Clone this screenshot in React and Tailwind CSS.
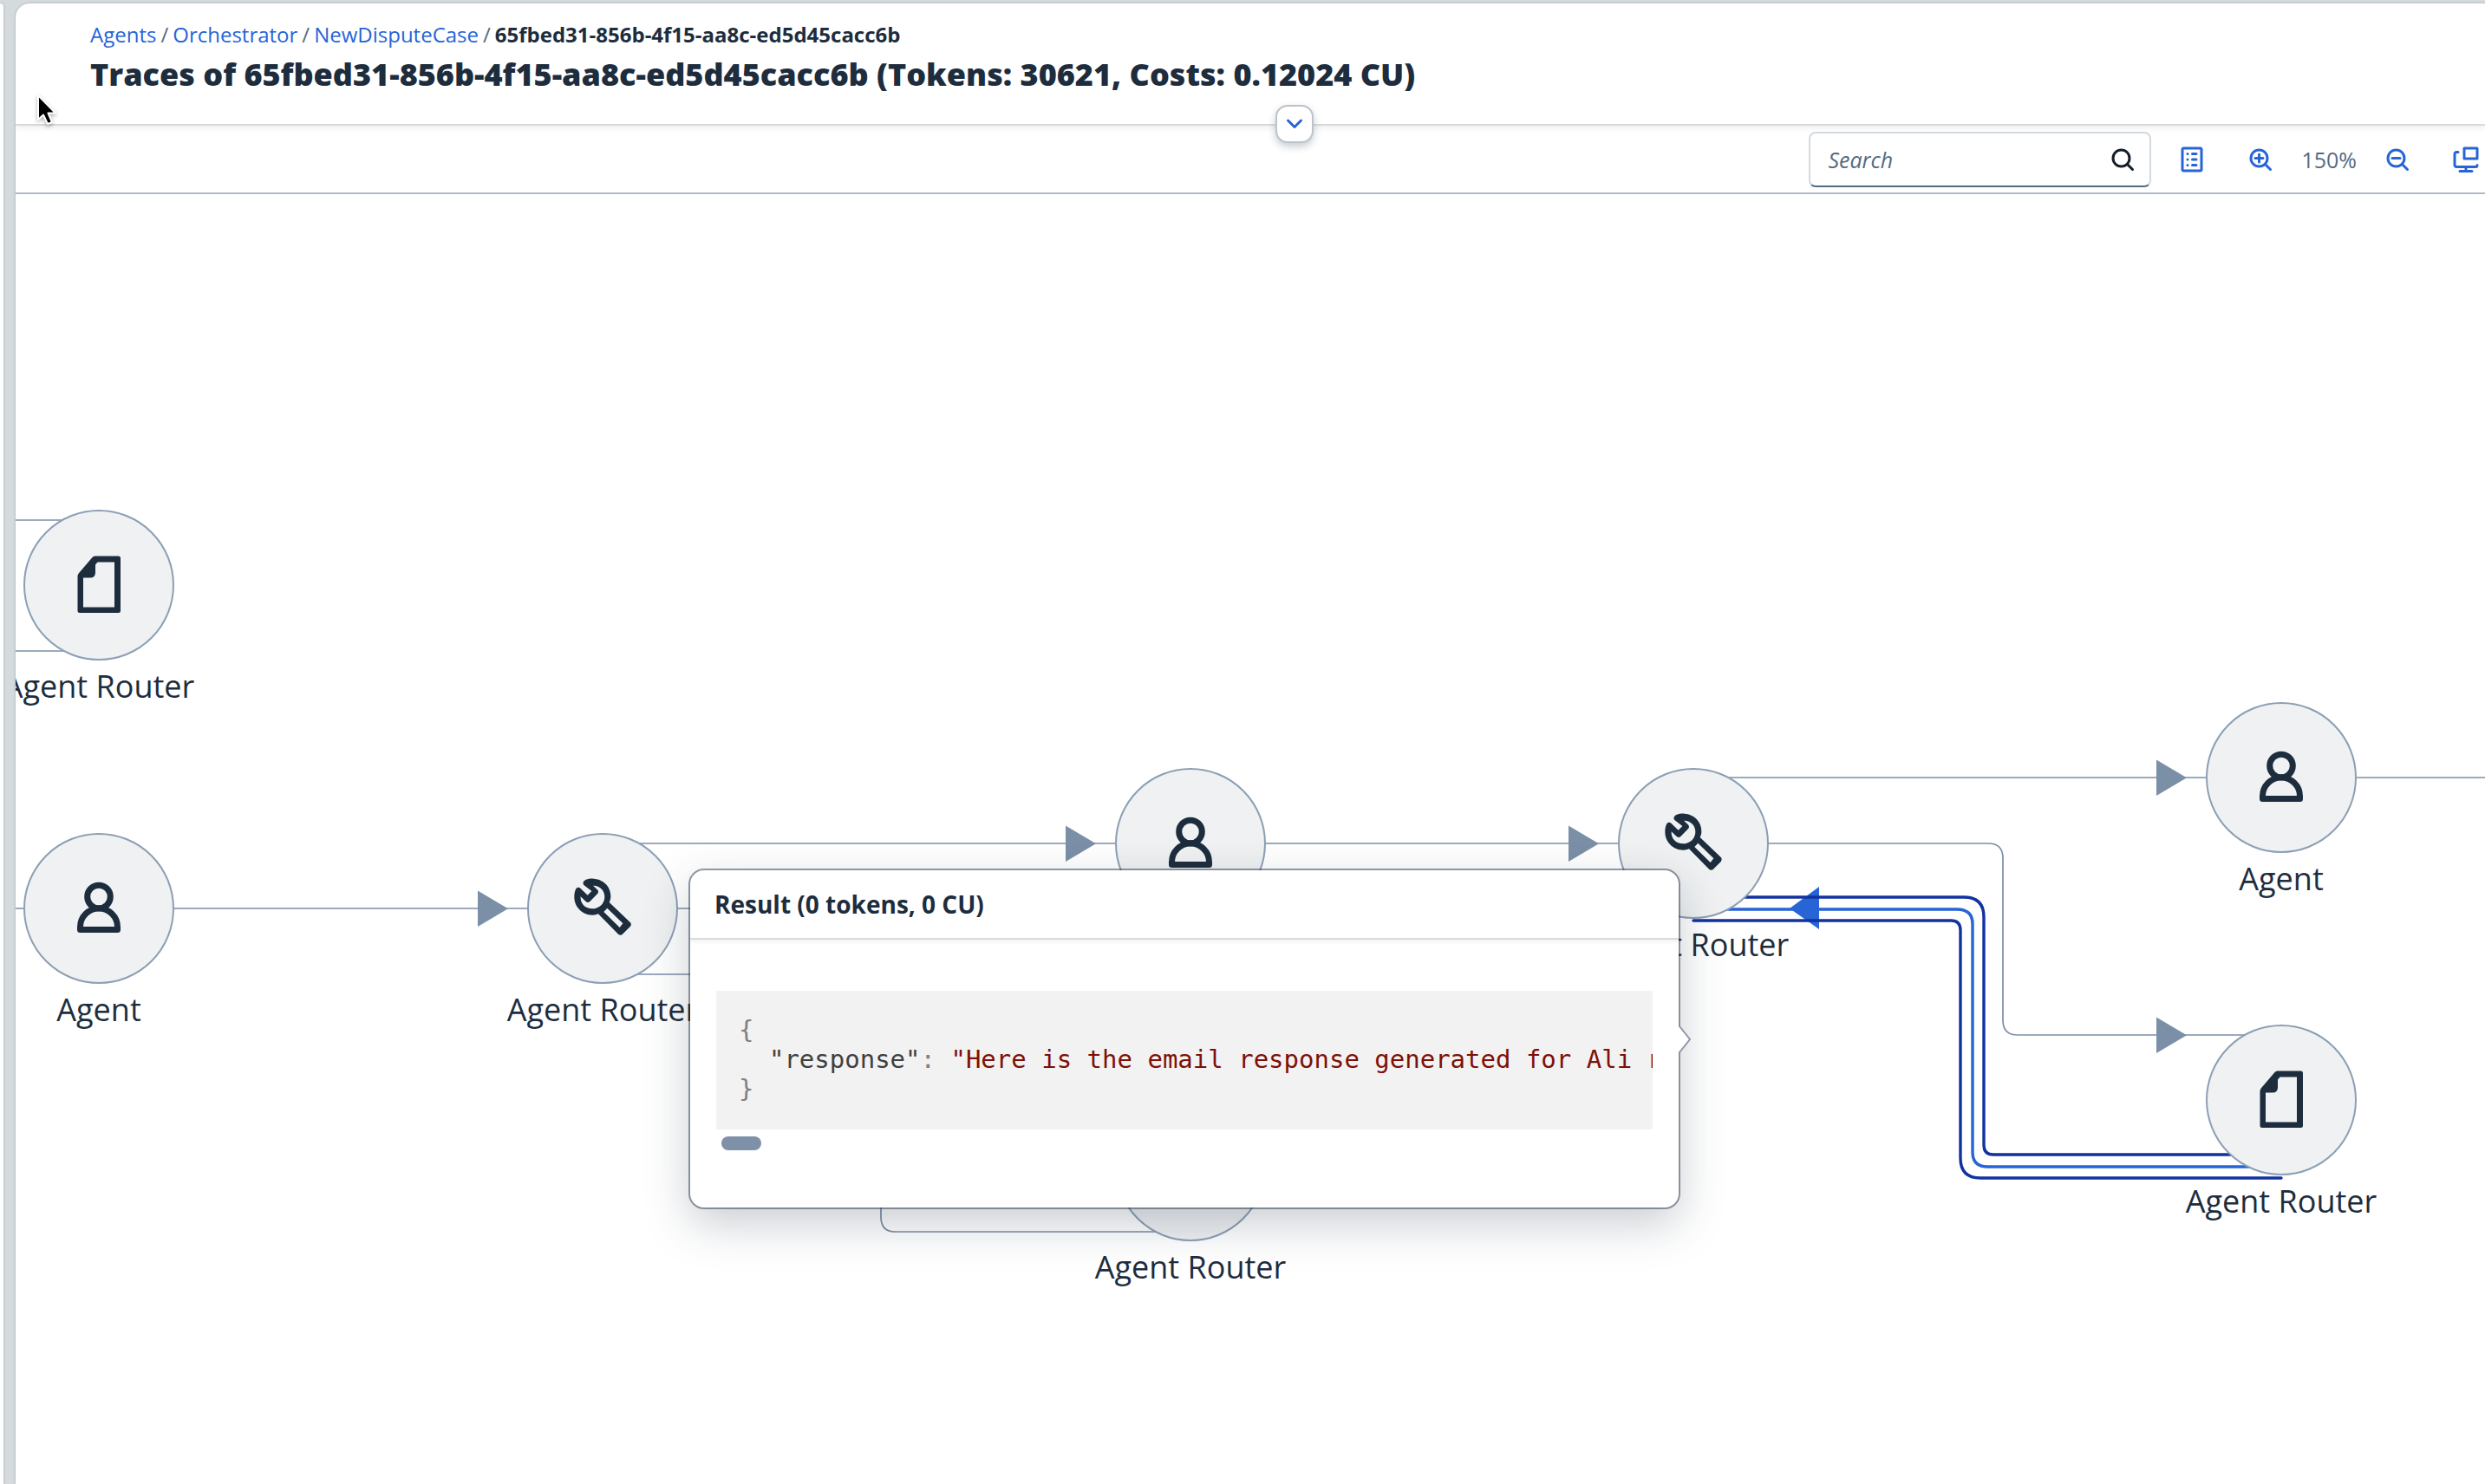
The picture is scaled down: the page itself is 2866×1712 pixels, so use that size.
import React from "react";

const PersonIcon = () => (
  <svg viewBox="-43 -43 86 86" className="size-[86px]" fill="none" stroke="#1d2d3e" strokeWidth="7" strokeLinejoin="round" aria-hidden="true">
    <circle cx="0" cy="-13.5" r="13.3" />
    <path d="M-21.5 24.5V21.5A21.5 21.5 0 0 1 21.5 21.5V24.5Z" />
  </svg>
);

const DocumentIcon = () => (
  <svg viewBox="-43 -43 86 86" className="size-[86px]" fill="#1d2d3e" fillRule="evenodd" aria-hidden="true">
    <path d="M-4.500 -33.500H22.500Q25 -33.500 25 -31V29.500Q25 32 22.500 32H-22Q-24.500 32 -24.500 29.500V-10Q-24.500 -12 -23.300 -13.500L-7.500 -32Q-6.300 -33.500 -4.500 -33.500ZM-1.500 -26.500L-4 -23.500V-14.500Q-4 -8.500 -10 -8.500H-18V25.500H18V-26.500Z" />
  </svg>
);

const WrenchIcon = () => (
  <svg viewBox="6 15 258 258" className="size-[86px]" fill="#1d2d3e" fillRule="evenodd" aria-hidden="true">
    <path d="M70 63C65 56 68 48 78 44C86 41 94 40 104 41C138 43 163 69 163 102C163 110 161 117 158 123L231 193Q236 199 231 206L203 234Q197 239 190 234L120 163C114 165 108 167 100 167C65 167 37 139 37 105C37 95 38 86 42 78C45 71 52 69 58 74L83 98L97 84ZM102 65L118 80Q122 86 118 92L91 120Q84 126 77 120L59 103C57 127 75 145 99 145C123 145 142 127 142 104C142 81 124 64 102 65ZM151 143L205 196L194 210L139 156Z" />
  </svg>
);

const ICONS = { person: PersonIcon, document: DocumentIcon, wrench: WrenchIcon };

const NODES = [
  { id: 1, icon: "document", label: "Agent Router", place: "left-[96px] top-[451px]" },
  { id: 2, icon: "person", label: "Agent", place: "left-[96px] top-[824px]" },
  { id: 3, icon: "wrench", label: "Agent Router", place: "left-[677px] top-[824px]" },
  { id: 4, icon: "person", label: "Agent", place: "left-[1355px] top-[749px]" },
  { id: 5, icon: "document", label: "Agent Router", place: "left-[1355px] top-[1121px]" },
  { id: 6, icon: "wrench", label: "Agent Router", place: "left-[1935px] top-[749px]" },
  { id: 7, icon: "person", label: "Agent", place: "left-[2613px] top-[673px]" },
  { id: 8, icon: "document", label: "Agent Router", place: "left-[2613px] top-[1045px]" },
];

function Node({ icon, label, place }) {
  const Icon = ICONS[icon];
  return (
    <div className={`absolute ${place} flex w-0 flex-col items-center`}>
      <div className="-mt-[87px] flex size-[174px] shrink-0 items-center justify-center rounded-full border-2 border-[#8c9fb4] bg-[#eff1f2]">
        <Icon />
      </div>
      <div className="mt-1.5 text-[36px] font-medium leading-[48px] whitespace-nowrap">{label}</div>
    </div>
  );
}

function Edges() {
  return (
    <svg className="absolute left-0 top-0 h-full w-full" fill="none" aria-hidden="true">
      <g stroke="#7b8fa6" strokeWidth="1.7">
        <path d="M0 376H96M0 527H96" />
        <path d="M0 824H677V749H1355" />
        <path d="M677 824H981Q998 824 998 841V1180Q998 1197 1015 1197H1355" />
        <path d="M677 900H900M1355 749H1935" />
        <path d="M1935 673H2900" />
        <path d="M1935 749H2275Q2292 749 2292 766V953Q2292 970 2309 970H2613" />
      </g>
      <g fill="#7b8fa6">
        <path d="M533 803.500V845L568 824.300Z" />
        <path d="M1211 728.500V770L1246 749.300Z" />
        <path d="M1791 728.500V770L1826 749.300Z" />
        <path d="M2469 652.500V694L2504 673.300Z" />
        <path d="M2469 949.500V991L2504 970.300Z" />
      </g>
      <path d="M1935 825H2239Q2257 825 2257 842V1105Q2257 1122 2274 1122H2613" stroke="#2764d6" strokeWidth="3.400" />
      <path d="M2080 799V848L2046 824Z" fill="#2764d6" />
      <g stroke="#1232a0" strokeWidth="3.400" strokeLinecap="round">
        <path d="M1935 811H2247Q2270 811 2270 834V1097Q2270 1108 2281 1108H2613" />
        <path d="M1935 838H2232Q2243 838 2243 849V1112Q2243 1135 2266 1135H2613" />
      </g>
    </svg>
  );
}

function ResultPopover() {
  return (
    <section
      aria-labelledby="result-title"
      className="absolute left-[778px] top-[780px] w-[1140px] rounded-2xl bg-white pb-[66px] shadow-[0_0_0_2px_rgba(34,53,72,0.48),0_18px_52px_rgba(34,53,72,0.25)]"
    >
      <header className="flex h-20 items-center border-b-2 border-[#d9d9d9] px-7 shadow-[0_3px_4px_rgba(34,53,72,0.06)]">
        <h2 id="result-title" className="text-[28px] font-bold leading-8">Result (0 tokens, 0 CU)</h2>
      </header>
      <div className="px-[30px] pt-[59px]">
        <pre className="overflow-hidden bg-[#f2f2f2] px-[26px] pb-[30px] pt-7 font-['DejaVu_Sans_Mono',monospace] text-[29px] leading-[34px] text-[#808080]">
          <code className="font-[inherit]">
            {"{\n  "}
            <span className="text-[#404040]">"response"</span>
            {": "}
            <span className="text-[#7f1007]">"Here is the email response generated for Ali r</span>
            {"\n}"}
          </code>
        </pre>
        <div className="ml-1.5 mt-2 h-4 w-[46px] rounded-lg bg-[#7f91a8]" />
      </div>
      <svg viewBox="0 0 18 32" className="absolute -right-4 top-[179px] h-8 w-[18px]" aria-hidden="true">
        <path d="M0 1H2L15 16L2 31H0Z" fill="#fff" />
        <path d="M3 1L15 16L3 31" fill="none" stroke="#8d98a5" strokeWidth="2" />
      </svg>
    </section>
  );
}

const ToolIcon = ({ children, label }) => (
  <button type="button" aria-label={label} className="shrink-0 text-[#2764d6]">
    <svg viewBox="0 0 30 30" className="size-[30px]" fill="none" stroke="currentColor" strokeWidth="3" strokeLinecap="round" strokeLinejoin="round" aria-hidden="true">
      {children}
    </svg>
  </button>
);

function Toolbar() {
  return (
    <div className="flex h-[79px] items-center justify-end border-b-2 border-[#b3bcc6] pr-[7px]">
      <div className="flex h-16 w-[395px] shrink-0 items-center rounded-lg border-2 border-[#d3dae0] border-b-[#556b82] bg-white pl-5 pr-4">
        <input type="search" aria-label="Search" placeholder="Search" className="min-w-0 flex-1 bg-transparent text-[25px] italic leading-8 outline-none placeholder:text-[#556b82] placeholder:opacity-100" />
        <button type="button" aria-label="Start search" className="text-[#131e29]">
          <svg viewBox="0 0 30 30" className="size-[30px]" fill="none" stroke="currentColor" strokeWidth="3" strokeLinecap="round" aria-hidden="true">
            <circle cx="13.500" cy="13.500" r="9.500" />
            <path d="M20.500 20.500L26.500 26.500" />
          </svg>
        </button>
      </div>
      <div className="ml-8 flex items-center gap-[49px]">
        <ToolIcon label="Legend">
          <rect x="4" y="2" width="22" height="26" rx="1.500" />
          <path d="M15.500 8.500H20M15.500 15H20M15.500 21.500H20M10 8.500H10.010M10 15H10.010M10 21.500H10.010" />
        </ToolIcon>
        <ToolIcon label="Zoom in">
          <circle cx="13.500" cy="13.500" r="9.500" />
          <path d="M20.500 20.500L26.500 26.500M9 13.500H18M13.500 9V18" />
        </ToolIcon>
      </div>
      <span className="mx-8 text-[25px] leading-8 text-[#556b82]">150%</span>
      <div className="flex items-center gap-[49px]">
        <ToolIcon label="Zoom out">
          <circle cx="13.500" cy="13.500" r="9.500" />
          <path d="M20.500 20.500L26.500 26.500M9 13.500H18" />
        </ToolIcon>
        <ToolIcon label="Zoom to fit">
          <path d="M13 2H28V14H13ZM6 6.500H4.500Q2 6.500 2 9V21Q2 23.500 4.500 23.500H26Q28 23.500 28 21.500M15 23.500V28M8 28.500H22" />
        </ToolIcon>
      </div>
    </div>
  );
}

const CRUMBS = ["Agents", "Orchestrator", "NewDisputeCase"];

export default function App() {
  return (
    <div className="flex h-screen overflow-hidden bg-[#d5dadd] pt-1 font-['Open_Sans','Noto_Sans',sans-serif] text-[#1d2d3e]">
      <div className="mr-3.5 w-1 shrink-0 rounded-tr-2xl bg-white shadow-[0_0_3px_rgba(34,53,72,0.3)]" />
      <main className="relative flex min-w-0 flex-1 flex-col overflow-hidden rounded-tl-2xl bg-white shadow-[0_0_3px_rgba(34,53,72,0.3)]">
        <header className="relative z-10 h-[141px] shrink-0 border-b-2 border-[#d9d9d9] px-[86px] pt-5 shadow-[0_3px_6px_rgba(34,53,72,0.08)]">
          <nav aria-label="Breadcrumb">
            <ol className="flex gap-[5px] text-[24px] leading-8">
              {CRUMBS.map((crumb) => (
                <li key={crumb} className="flex gap-[5px]">
                  <a href="#" className="text-[#2764d6]">{crumb}</a>
                  <span className="text-[#556b82]">/</span>
                </li>
              ))}
              <li className="font-bold" aria-current="page">65fbed31-856b-4f15-aa8c-ed5d45cacc6b</li>
            </ol>
          </nav>
          <h1 className="mt-2 text-[36px] font-extrabold leading-[44px] whitespace-nowrap">
            Traces of 65fbed31-856b-4f15-aa8c-ed5d45cacc6b (Tokens: 30621, Costs: 0.12024 CU)
          </h1>
          <button
            type="button"
            aria-label="Expand header"
            className="absolute -bottom-[22px] left-[51.800%] flex size-11 -translate-x-1/2 items-center justify-center rounded-[14px] border-2 border-[#bcc3ca] bg-white text-[#2764d6] shadow-[0_4px_8px_rgba(34,53,72,0.25)]"
          >
            <svg viewBox="0 0 24 24" className="size-6" fill="none" stroke="currentColor" strokeWidth="3" strokeLinecap="round" strokeLinejoin="round" aria-hidden="true">
              <path d="M4.500 8L12 15.500L19.500 8" />
            </svg>
          </button>
        </header>
        <Toolbar />
        <div className="relative min-h-0 flex-1 overflow-hidden">
          <Edges />
          {NODES.map((node) => (
            <Node key={node.id} {...node} />
          ))}
          <ResultPopover />
        </div>
        <svg viewBox="0 0 26 40" className="absolute left-[23px] top-[104px] z-20 h-10 w-[26px] drop-shadow-[0_2px_2px_rgba(0,0,0,0.3)]" aria-hidden="true">
          <path d="M3 2V30L9 24.500L14 35L19 33L14.500 22.500H23Z" fill="#000" stroke="#fff" strokeWidth="2" strokeLinejoin="round" />
        </svg>
      </main>
    </div>
  );
}
